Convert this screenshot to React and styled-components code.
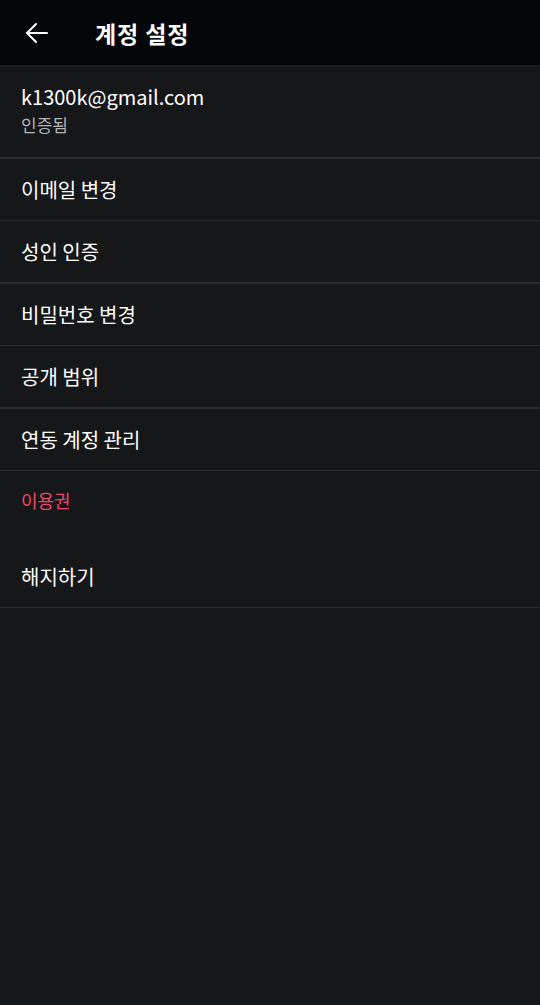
import React from 'react'
import styled, { createGlobalStyle } from 'styled-components'

const GlobalStyle = createGlobalStyle`
    body {
        margin: 0;
        background-color: #161719;
        font-family: "Noto Sans CJK KR", "Noto Sans", sans-serif;
        color: #ffffff;
    }
`

const menu = [
    { label: '이메일 변경', border: 1 },
    { label: '성인 인증', border: 2 },
    { label: '비밀번호 변경', border: 1 },
    { label: '공개 범위', border: 2 },
    { label: '연동 계정 관리', border: 1 },
]

function BackArrow() {
    return (
        <svg width="24" height="24" viewBox="0 0 24 24" fill="none" stroke="#fff" strokeWidth="2" strokeLinecap="round" strokeLinejoin="round">
            <path d="M22 12H2" />
            <path d="M11 3l-9 9 9 9" />
        </svg>
    )
}

function App() {
    return (
        <Page>
            <GlobalStyle />
            <Header>
                <BackButton>
                    <BackArrow />
                </BackButton>
                <Title>계정 설정</Title>
            </Header>

            <Account>
                <Email>k1300k@gmail.com</Email>
                <Verified>인증됨</Verified>
            </Account>

            {menu.map((item) => (
                <Row key={item.label} border={item.border}>
                    {item.label}
                </Row>
            ))}

            <SectionLabel>이용권</SectionLabel>
            <Row border={1}>해지하기</Row>
        </Page>
    )
}

export default App

const Page = styled.div`
    min-height: 1005px;
    background-color: #161719;
`

const Header = styled.div`
    height: 65px;
    display: flex;
    align-items: center;
    background-color: #030608;
    border-bottom: 2px solid #1c1d1f;
`

const BackButton = styled.div`
    width: 24px;
    height: 24px;
    margin-left: 25px;
    display: flex;
`

const Title = styled.div`
    margin-left: 46px;
    font-size: 23px;
    font-weight: 700;
    letter-spacing: 0.9px;
`

const Account = styled.div`
    height: 92px;
    padding: 15px 21px 0;
    box-sizing: border-box;
    border-bottom: 2px solid #2a2b2d;
`

const Email = styled.div`
    font-size: 20px;
    line-height: 30px;
`

const Verified = styled.div`
    font-size: 17px;
    line-height: 26px;
    color: #b4b5b7;
`

const Row = styled.div`
    height: 61px;
    padding: 0 21px;
    display: flex;
    align-items: center;
    font-size: 20px;
    border-bottom: ${(p) => p.border}px solid #2a2b2d;
`

const SectionLabel = styled.div`
    height: 75px;
    padding: 15px 21px 0;
    box-sizing: border-box;
    font-size: 18px;
    line-height: 28px;
    color: #f0466b;
`
